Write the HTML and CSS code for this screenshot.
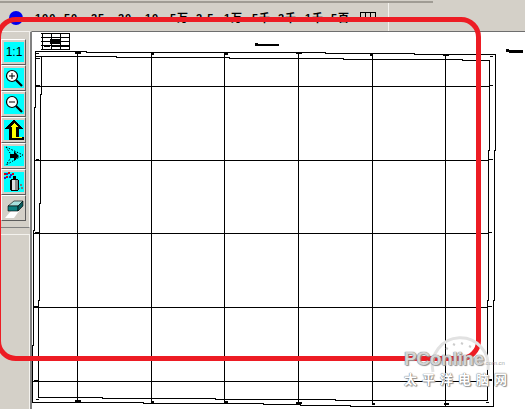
FILE: index.html
```html
<!DOCTYPE html>
<html lang="zh-CN">
<head>
  <meta charset="UTF-8">
  <title>PCB</title>
  <link rel="stylesheet" href="styles.css">
</head>
<body>
  <div class="window">
    <div class="topbar">
      <span class="dot"></span>
      <div class="values">
        <span class="val v100">100</span>
        <span class="val v50">50</span>
        <span class="val v25">25</span>
        <span class="val v20">20</span>
        <span class="val v10">10</span>
        <span class="val v5w">5万</span>
        <span class="val v25b">2.5</span>
        <span class="val v1w">1万</span>
        <span class="val v5k">5千</span>
        <span class="val v2k">2千</span>
        <span class="val v1k">1千</span>
        <span class="val v5b">5百</span>
        <span class="cells"><i></i><i></i><i></i></span>
      </div>
      <span class="divider"></span>
    </div>
    <div class="main">
      <div class="side">
        <div class="tools">
          <div class="tool"><div class="face face-text">1:1</div></div>
          <div class="tool"><div class="face">
            <svg width="20" height="20" viewBox="0 0 20 20">
              <circle cx="8" cy="8" r="5.5" fill="#fff" stroke="#000" stroke-width="1.2"/>
              <path d="M5 8h6M8 5v6" stroke="#000" stroke-width="1"/>
              <path d="M12 12l6 6" stroke="#000" stroke-width="2.2"/>
            </svg>
          </div></div>
          <div class="tool"><div class="face">
            <svg width="20" height="20" viewBox="0 0 20 20">
              <circle cx="8" cy="8" r="5.5" fill="#fff" stroke="#000" stroke-width="1.2"/>
              <path d="M5 8h6" stroke="#000" stroke-width="1"/>
              <path d="M12 12l6 6" stroke="#000" stroke-width="2.2"/>
            </svg>
          </div></div>
          <div class="tool"><div class="face">
            <svg width="20" height="20" viewBox="0 0 20 20" shape-rendering="crispEdges">
              <path d="M10 0L20 9H15V17H20V20H5V9H0Z" fill="#000"/>
              <path d="M10 3L14 7H12V17H8V7H6Z" fill="#ff0"/>
              <path d="M12 17H18V18H8V17Z" fill="#ff0"/>
            </svg>
          </div></div>
          <div class="tool"><div class="face">
            <svg width="20" height="20" viewBox="0 0 20 20">
              <path d="M2 1L19 9L2 19" fill="none" stroke="#000" stroke-dasharray="1.5 1.5"/>
              <path d="M2 1L8 10L2 19" fill="none" stroke="#000" stroke-dasharray="1.5 1.5"/>
              <path d="M6 8H10V5L15 10L10 15V12H6Z" fill="#000"/>
            </svg>
          </div></div>
          <div class="tool"><div class="face">
            <svg width="20" height="20" viewBox="0 0 20 20" shape-rendering="crispEdges">
              <path d="M0 1h2v2H0zM4 0h2v2H4zM2 4h2v2H2zM8 1h2v2H8z" fill="#d00"/>
              <path d="M2 1h2v2H2zM6 2h2v2H6zM0 5h2v2H0zM5 4h2v2H5z" fill="#22c"/>
              <path d="M9 4h3v3H9z" fill="#000"/>
              <path d="M7 7h7v1h1v10h-1v1H7v-1H6V8h1z" fill="#000"/>
              <path d="M8 8h3v10H8z" fill="#ddd"/>
              <path d="M11 8h3v10h-3z" fill="#888"/>
              <path d="M16 12h2v2h-2zM17 15h2v2h-2zM15 16h1v1h-1z" fill="#777"/>
            </svg>
          </div></div>
          <div class="tool"><div class="face face-plain">
            <svg width="20" height="20" viewBox="0 0 20 20">
              <path d="M1 20L7 13H15L10 20Z" fill="#fff"/>
              <path d="M4 8L10 3H19L14 8Z" fill="#a8e0dc" stroke="#000" stroke-width=".6"/>
              <path d="M4 8H14V13H4Z" fill="#0f8080" stroke="#000" stroke-width=".6"/>
              <path d="M14 8L19 3V8L14 13Z" fill="#0a5c5c" stroke="#000" stroke-width=".6"/>
            </svg>
          </div></div>
        </div>
        <div class="side-rest"></div>
      </div>
      <div class="canvas">
        <svg class="drawing" width="493" height="377" viewBox="32 32 493 377" shape-rendering="crispEdges">
          <g fill="none" stroke="#000">
            <!-- outer frame, scanned so it steps a little -->
            <path d="M35 51.5H86V52.5H325V53.5H414V54.5H495.5V150H494.5V300H493.5V406.5H350V405.5H300V404.5H263V403.5H143V402.5H32.5V345H33.5V230H34.5V107H35.5V51"/>
            <path d="M36 56.5H116V57.5H229V58.5H343V59.5H462V60.5H489.5V150H488.5V300H487.5V400.5H335V399.5H215V398.5H102V397.5H38V396.5H38.5V300H39.5V203H40.5V94H41.5V56"/>
            <!-- grid -->
            <path d="M35 86.5H489M34 160.5H489M34 233.5H488M33 307.5H488M33 381.5H488"/>
            <path d="M77.5 52V403M151.5 52V403M224.5 52V404M298.5 52V405M372.5 53V405M445.5 54V406"/>
          </g>
          <g fill="#000">
            <!-- small ticks on the frame -->
            <path d="M75 52h6v2h-6zM151 53h3v2h-3zM224 53h4v2h-4zM296 53h6v1h-6zM370 54h3v2h-3zM443 54h6v2h-6z"/>
            <path d="M36 85h4v1h-4zM36 159h3v1h-3zM35 232h4v1h-4zM34 306h4v1h-4zM34 380h4v1h-4zM36 58h4v1h-4z"/>
            <path d="M75 400h6v2h-6zM151 401h3v2h-3zM224 401h4v2h-4zM296 402h6v2h-6zM372 403h3v2h-3zM444 403h5v2h-5z"/>
            <path d="M489 85h4v1h-4zM489 159h4v1h-4zM488 232h4v1h-4zM488 306h4v1h-4zM487 379h5v2h-5z"/>
            <path d="M36 53h3v1h-3zM36 399h3v1h-3zM486 402h3v1h-3zM490 56h3v1h-3z"/>
            <!-- small unreadable captions -->
            <path d="M255 43h3v3h-3zM258 44h21v2h-21zM506 49h3v3h-3zM509 50h14v3h-14z"/>
          </g>
          <!-- title block -->
          <g>
            <rect x="41" y="33" width="30" height="17" fill="#fff"/>
            <path d="M41 33h29v1H41zM41 37h29v1H41zM41 41h29v1H41zM41 45h29v1H41zM41 49h29v1H41zM42 33h1v17h-1zM51 33h1v17h-1zM60 33h1v17h-1zM69 33h1v17h-1z" fill="#000"/>
            <path d="M50 39h10v5H50zM52 46h17v1H52zM44 46h6v1h-6z" fill="#000"/>
          </g>
        </svg>
      </div>
    </div>
    <div class="redframe"></div>
    <div class="mark">
      <svg class="mark-ring" width="64" height="64" viewBox="0 0 64 64">
        <path d="M5 38A28 28 0 1 1 60 36" fill="none" stroke="#e2e2e2" stroke-width="3"/>
        <path d="M18 14l2 1M25 10l2 1M33 9l2 1M41 12l2 1" stroke="#ccc" stroke-width="2"/>
      </svg>
      <div class="mark-name">PConline<span class="mark-dom">.com.cn</span></div>
      <div class="mark-cn">太平洋电脑网</div>
    </div>
  </div>
</body>
</html>
```

FILE: styles.css
```css
* {
  box-sizing: border-box;
}
html, body {
  margin: 0;
  height: 100%;
  overflow: hidden;
}
.window {
  position: relative;
  width: 525px;
  height: 409px;
  background: #d4d0c8;
  font-family: "Liberation Sans", "Noto Sans CJK SC", sans-serif;
  overflow: hidden;
}
.topbar {
  position: relative;
  height: 31px;
  display: flex;
  align-items: flex-start;
  padding: 11px 0 0 9px;
}
.topbar::before {
  content: "";
  position: absolute;
  left: 0;
  top: 1px;
  width: 433px;
  height: 2px;
  background: #a09c94;
}
.dot {
  width: 14px;
  height: 14px;
  border-radius: 50%;
  background: #0000ee;
}
.values {
  display: flex;
  align-items: flex-start;
  margin-left: 12px;
  padding-top: 1px;
}
.val {
  font-size: 11px;
  font-weight: bold;
  line-height: 12px;
  letter-spacing: 1px;
  color: #000;
  white-space: nowrap;
}
.v100 { width: 29px; }
.v50 { width: 27px; }
.v25 { width: 27px; }
.v20 { width: 27px; }
.v10 { width: 25px; }
.v5w { width: 26px; }
.v25b { width: 28px; }
.v1w { width: 28px; }
.v5k { width: 26px; }
.v2k { width: 27px; }
.v1k { width: 26px; }
.v5b { width: 29px; }
.cells {
  display: flex;
  border: 1px solid #000;
  height: 6px;
}
.cells i {
  width: 5px;
  border-right: 1px solid #000;
}
.cells i:last-child {
  width: 4px;
  border-right: 0;
}
.divider {
  position: absolute;
  left: 388px;
  top: 3px;
  width: 1px;
  height: 28px;
  background: #f4f2ee;
}
.main {
  display: flex;
  height: 378px;
}
.side {
  width: 32px;
  flex: none;
  border-right: 2px solid #808080;
  border-top: 1px solid #f4f2ee;
  display: flex;
  flex-direction: column;
  background: #d4d0c8;
}
.tools {
  height: 196px;
  padding: 7px 2px 0 1px;
  border-right: 1px solid #f4f2ee;
  border-bottom: 1px solid #808080;
}
.tool {
  width: 25px;
  height: 26px;
  padding: 2px;
  background: #d4d0c8;
  border: 1px solid;
  border-color: #fff #5c5c5c #5c5c5c #fff;
}
.face {
  width: 20px;
  height: 20px;
  background: #00ffff;
  display: flex;
  align-items: center;
  justify-content: center;
}
.face svg {
  display: block;
}
.face-text {
  font-size: 12px;
  color: #000;
  line-height: 20px;
}
.face-plain {
  background: transparent;
}
.side-rest {
  flex: 1;
  border-top: 1px solid #f4f2ee;
  border-right: 1px solid #f4f2ee;
  margin-top: 6px;
}
.canvas {
  flex: 1;
  background: #fff;
  border-top: 1px solid #6e6e6e;
}
.drawing {
  display: block;
}
.redframe {
  position: absolute;
  left: -4px;
  top: 17px;
  width: 485px;
  height: 344px;
  border: 5px solid #ed1c24;
  border-radius: 20px;
}
.mark {
  position: absolute;
  left: 404px;
  top: 350px;
  width: 110px;
  height: 40px;
}
.mark-ring {
  position: absolute;
  left: 24px;
  top: -16px;
}
.mark-name {
  position: relative;
  font-size: 19px;
  line-height: 18px;
  font-weight: bold;
  color: rgba(255, 255, 255, .7);
  text-shadow: 0 0 1px #777, 0 0 1px #777, 1px 1px 1px #999;
  white-space: nowrap;
  letter-spacing: -.3px;
}
.mark-dom {
  font-size: 6px;
  font-weight: normal;
  color: #aaa;
  letter-spacing: 0;
  text-shadow: none;
}
.mark-cn {
  position: relative;
  margin-top: 1px;
  font-size: 13px;
  line-height: 14px;
  font-weight: bold;
  letter-spacing: 5px;
  color: #fff;
  text-shadow: 0 0 1px #777, 0 0 1px #777, 1px 1px 1px #999;
  white-space: nowrap;
}
```
